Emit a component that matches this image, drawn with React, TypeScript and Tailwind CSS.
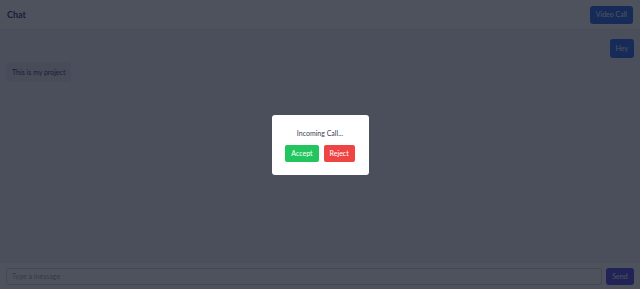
import { useState } from "react";

type Message = {
  id: number;
  text: string;
  mine: boolean;
};

const initialMessages: Message[] = [
  { id: 1, text: "Hey", mine: true },
  { id: 2, text: "This is my project", mine: false },
];

export default function App() {
  const [messages] = useState<Message[]>(initialMessages);
  const [draft, setDraft] = useState("");
  const [incoming, setIncoming] = useState(true);

  return (
    <div className="relative flex h-[289px] w-full flex-col bg-[#f3f4f6] font-['Lato',sans-serif]">
      <header className="flex h-[30px] flex-none items-center justify-between border-b border-[#e5e7eb] bg-white px-[7px]">
        <h1 className="text-[9px] font-bold text-[#312e81]">Chat</h1>
        <button className="h-[18px] rounded-[3px] bg-[#2563eb] px-[6px] text-[7px] text-white">
          Video Call
        </button>
      </header>

      <main className="flex flex-1 flex-col gap-[4px] overflow-y-auto px-[6px] pt-[9px]">
        {messages.map((m) => (
          <div
            key={m.id}
            className={m.mine ? "flex justify-end" : "flex justify-start"}
          >
            <div
              className={
                m.mine
                  ? "rounded-[3px] bg-[#2563eb] px-[6px] py-[4px] text-[7px] leading-[11px] text-white"
                  : "rounded-[3px] bg-[#e5e7eb] px-[6px] py-[5px] text-[7px] leading-[10px] text-[#312e81]"
              }
            >
              {m.text}
            </div>
          </div>
        ))}
      </main>

      <footer className="flex h-[28px] flex-none items-center gap-[4px] border-t border-[#e5e7eb] bg-white px-[6px] pt-[1px]">
        <input
          value={draft}
          onChange={(e) => setDraft(e.target.value)}
          placeholder="Type a message"
          className="h-[17px] flex-1 rounded-[3px] border border-[#d1d5db] px-[5px] text-[7px] outline-none placeholder:text-[#9ca3af]"
        />
        <button className="h-[17px] w-[28px] rounded-[3px] bg-[#4f46e5] text-[7px] text-white">
          Send
        </button>
      </footer>

      {incoming && (
        <div className="absolute inset-0 flex items-center justify-center bg-[#111827]/75">
          <div className="flex w-[97px] flex-col items-center rounded-[3px] bg-white pt-[13px] pb-[13px]">
            <p className="text-[7px] leading-[10px] text-[#374151]">Incoming Call...</p>
            <div className="mt-[7px] flex gap-[5px]">
              <button
                onClick={() => setIncoming(false)}
                className="h-[17px] rounded-[2px] bg-[#22c55e] px-[6px] text-[7px] text-white"
              >
                Accept
              </button>
              <button
                onClick={() => setIncoming(false)}
                className="h-[17px] rounded-[2px] bg-[#ef4444] px-[6px] text-[7px] text-white"
              >
                Reject
              </button>
            </div>
          </div>
        </div>
      )}
    </div>
  );
}
